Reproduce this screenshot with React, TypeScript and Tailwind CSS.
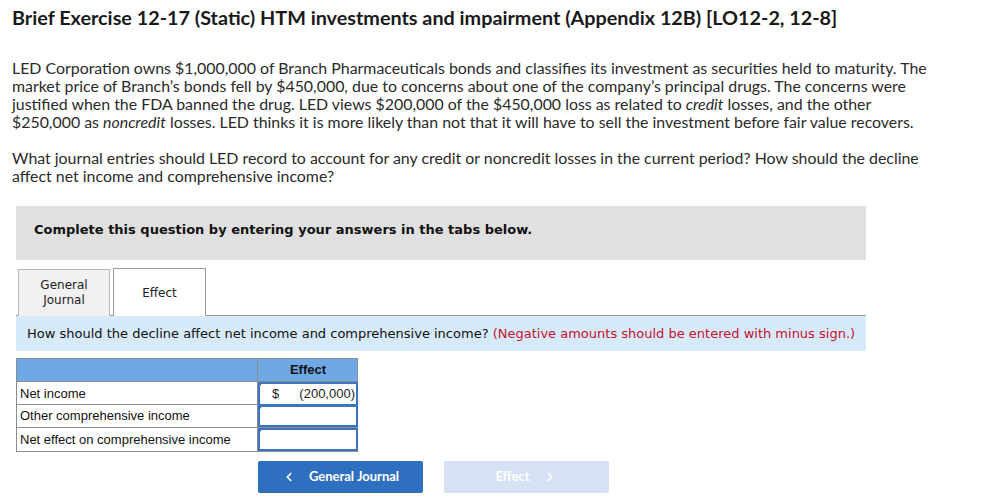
import { ChevronLeft, ChevronRight } from "lucide-react";

const body = "font-['Lato','Open_Sans',sans-serif]";
const verdana = "font-['DejaVu_Sans','Verdana',sans-serif]";
const arial = "font-['Liberation_Sans','Arial',sans-serif]";

const rows = [
  { label: "Net income", value: "(200,000)" },
  { label: "Other comprehensive income", value: "" },
  { label: "Net effect on comprehensive income", value: "" },
];

const InputCell = ({ value }: { value: string }) => (
  <div className="relative h-full border-2 border-[#3a74c2] bg-white flex items-center text-[13px] text-[#222]">
    {/* little marker */}
    <span className="absolute -left-[2px] -top-[2px] w-0 h-0 border-t-[7px] border-t-[#3a74c2] border-r-[5px] border-r-transparent"></span>
    {value && (
      <>
        <span className="pl-[12px]">$</span>
        <span className="ml-auto pr-[1px]">{value}</span>
      </>
    )}
  </div>
);

const App = () => {
  return (
    <div className="w-[995px] h-[500px] bg-white text-[#222] overflow-hidden">
      {/* Heading */}
      <h1 className={`${body} font-bold text-[19.8px] leading-[24px] text-[#1a1a1a] pl-[12px] pt-[5px]`}>
        Brief Exercise 12-17 (Static) HTM investments and impairment (Appendix 12B) [LO12-2, 12-8]
      </h1>

      {/* Problem text */}
      <div className={`${body} text-[15.9px] leading-[18px] text-[#2a2a2a] pl-[12px] mt-[30px]`}>
        <p>
          LED Corporation owns $1,000,000 of Branch Pharmaceuticals bonds and classifies its investment as securities held to maturity. The
          <br />
          market price of Branch’s bonds fell by $450,000, due to concerns about one of the company’s principal drugs. The concerns were
          <br />
          justified when the FDA banned the drug. LED views $200,000 of the $450,000 loss as related to <i>credit</i> losses, and the other
          <br />
          $250,000 as <i>noncredit</i> losses. LED thinks it is more likely than not that it will have to sell the investment before fair value recovers.
        </p>
        <p className="mt-[18px]">
          What journal entries should LED record to account for any credit or noncredit losses in the current period? How should the decline
          <br />
          affect net income and comprehensive income?
        </p>
      </div>

      {/* Instructions box */}
      <div className={`${verdana} ml-[16px] mt-[21px] w-[850px] h-[54px] bg-[#e0e0e0] pt-[16px] pl-[18px] text-[13px] leading-[16px] font-bold text-[#111]`}>
        Complete this question by entering your answers in the tabs below.
      </div>

      {/* Tabs */}
      <div className={`${verdana} ml-[16px] mt-[8px] w-[850px] flex items-end border-b border-[#9a9a9a] text-[12px] text-[#222]`}>
        <div className="ml-[2px] w-[92px] h-[47px] bg-[#f1f1f1] border border-b-0 border-[#b8b8b8] flex items-center justify-center text-center leading-[15px] -mb-px">
          General
          <br />
          Journal
        </div>
        <div className="ml-[3px] w-[93px] h-[48px] bg-white border border-b-0 border-[#9a9a9a] flex items-center justify-center -mb-px">
          Effect
        </div>
      </div>

      <div className={`${verdana} ml-[16px] w-[850px] h-[35px] bg-[#d7eaf9] flex items-center pl-[11px] text-[13px] text-[#111]`}>
        How should the decline affect net income and comprehensive income?&nbsp;
        <span className="text-[#c8102e]">(Negative amounts should be entered with minus sign.)</span>
      </div>

      {/* Answer table */}
      <div className={`${arial} ml-[16px] mt-[7px] w-[342px] border border-[#8c8c8c] text-[13px] text-[#111]`}>
        <div className="grid grid-cols-[241px_100px] h-[23px] bg-[#6fa8e6] border-b border-[#8c8c8c]">
          <div className="border-r border-[#8c8c8c]"></div>
          <div className="flex items-center justify-center font-bold text-[13px]">Effect</div>
        </div>
        {rows.map((r, i) => (
          <div
            key={r.label}
            className={`grid grid-cols-[241px_100px] h-[23px] ${i < rows.length - 1 ? "border-b border-[#8c8c8c]" : ""}`}
          >
            <div className="border-r border-[#8c8c8c] flex items-center pl-[3px]">{r.label}</div>
            <InputCell value={r.value} />
          </div>
        ))}
      </div>

      {/* Nav buttons */}
      <div className={`${body} flex gap-[21px] ml-[258px] mt-[9px]`}>
        <button className="w-[165px] h-[32px] rounded-[2px] bg-[#2f6fc0] text-white text-[13px] font-bold flex items-center justify-center gap-[13px]">
          <ChevronLeft size={14} strokeWidth={3} />
          General Journal
        </button>
        <button className="w-[165px] h-[32px] rounded-[2px] bg-[#d6e2f4] text-white text-[13px] font-bold flex items-center justify-center gap-[14px]">
          Effect
          <ChevronRight size={14} strokeWidth={3} />
        </button>
      </div>
    </div>
  );
};

export default App;
